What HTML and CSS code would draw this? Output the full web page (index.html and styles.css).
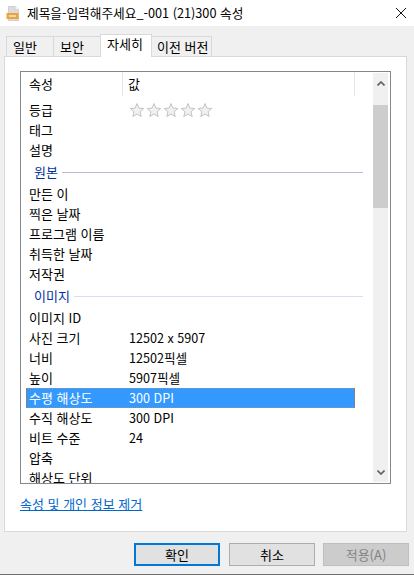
FILE: index.html
```html
<!DOCTYPE html>
<html lang="ko">
<head>
<meta charset="utf-8">
<title>속성</title>
<link rel="stylesheet" href="styles.css">
</head>
<body>
<div class="window">
  <header class="titlebar">
    <svg class="file-icon" width="14" height="15" viewBox="0 0 14 15"><path d="M2.500 0.500h6.500l3.500 3.500v10.500h-10z" fill="#dcdcdc" stroke="#cfcfcf"/><path d="M9 .5v3.500h3.500" fill="#f4f4f4" stroke="#cfcfcf"/><rect x="0.500" y="7" width="12" height="6" fill="#eda23e"/><rect x="3" y="9" width="7" height="2" fill="#f8d9a6"/></svg>
    <span class="title">제목을-입력해주세요_-001 (21)300 속성</span>
    <svg class="close" width="10" height="10" viewBox="0 0 10 10"><path d="M0 0L10 10M10 0L0 10" stroke="#111" stroke-width="1" fill="none"/></svg>
  </header>
  <main class="body">
    <nav class="tabs">
      <span class="tab t1">일반</span>
      <span class="tab t2">보안</span>
      <span class="tab active">자세히</span>
      <span class="tab t4">이전 버전</span>
    </nav>
    <section class="panel">
      <div class="listbox">
        <div class="list">
          <div class="head">
            <span class="hname">속성</span>
            <span class="hval">값</span>
          </div>
          <div class="row"><span class="k">등급</span><span class="v stars"><svg width="84" height="16" viewBox="0 0 84 16"><defs><path id="s" d="M8 1.500l1.900 4.600 4.900.4-3.700 3.200 1.100 4.800L8 12l-4.200 2.500 1.100-4.800L1.200 6.500l4.900-.4z" fill="#f1f1f1" stroke="#c4c4c4"/></defs><use href="#s"/><use href="#s" x="17"/><use href="#s" x="34"/><use href="#s" x="51"/><use href="#s" x="68"/></svg></span></div>
          <div class="row"><span class="k">태그</span></div>
          <div class="row"><span class="k">설명</span></div>
          <div class="group"><span>원본</span><i class="g1"></i></div>
          <div class="row"><span class="k">만든 이</span></div>
          <div class="row"><span class="k">찍은 날짜</span></div>
          <div class="row"><span class="k">프로그램 이름</span></div>
          <div class="row"><span class="k">취득한 날짜</span></div>
          <div class="row"><span class="k">저작권</span></div>
          <div class="group"><span>이미지</span><i class="g2"></i></div>
          <div class="row"><span class="k">이미지 ID</span></div>
          <div class="row"><span class="k">사진 크기</span><span class="v">12502 x 5907</span></div>
          <div class="row"><span class="k">너비</span><span class="v">12502픽셀</span></div>
          <div class="row"><span class="k">높이</span><span class="v">5907픽셀</span></div>
          <div class="row selected"><span class="k">수평 해상도</span><span class="v">300 DPI</span></div>
          <div class="row"><span class="k">수직 해상도</span><span class="v">300 DPI</span></div>
          <div class="row"><span class="k">비트 수준</span><span class="v">24</span></div>
          <div class="row"><span class="k">압축</span></div>
          <div class="row"><span class="k">해상도 단위</span></div>
        </div>
        <div class="scrollbar">
          <svg class="arrow" width="8" height="5" viewBox="0 0 8 5"><path d="M0.500 4.500L4 1l3.500 3.500" fill="none" stroke="#606060" stroke-width="1.600"/></svg>
          <div class="thumb"></div>
          <svg class="arrow down" width="8" height="5" viewBox="0 0 8 5"><path d="M0.500 0.500L4 4l3.500-3.500" fill="none" stroke="#606060" stroke-width="1.600"/></svg>
        </div>
      </div>
      <a class="link">속성 및 개인 정보 제거</a>
    </section>
    <footer class="buttons">
      <button class="btn primary">확인</button>
      <button class="btn">취소</button>
      <button class="btn disabled">적용(A)</button>
    </footer>
  </main>
</div>
</body>
</html>
```
FILE: styles.css
```css
* { box-sizing: border-box; }
html, body { margin: 0; padding: 0; }
body {
  width: 414px; height: 575px; overflow: hidden;
  font-family: "Noto Sans CJK KR", "Noto Sans", sans-serif;
  font-size: 13px; color: #000; background: #f0f0f0;
}
.window { height: 575px; display: flex; flex-direction: column; border-bottom: 1px solid #6e6e6e; }
.titlebar { height: 26px; background: #fff; display: flex; align-items: center; padding: 0 8px 0 6px; flex: none; }
.file-icon { flex: none; margin-right: 7px; }
.title { flex: 1; white-space: nowrap; line-height: 20px; font-size: 12.7px; }
.close { flex: none; }
.body { flex: 1; display: flex; flex-direction: column; padding: 8px 7px 0 4px; background: #f0f0f0; }
.tabs { display: flex; height: 22px; padding-left: 2px; align-items: flex-end; position: relative; z-index: 1; }
.tab { height: 20px; border: 1px solid #d9d9d9; border-bottom: 0; background: #f0f0f0; display: flex; align-items: center; margin-left: -1px; line-height: 18px; padding-left: 6px; }
.tab:first-child { margin-left: 0; }
.t1 { width: 48px; }
.t2 { width: 48px; }
.t4 { width: 61px; padding-left: 5px; }
.tab.active { height: 23px; width: 52px; background: #fff; margin-bottom: -1px; position: relative; z-index: 2; padding-bottom: 5px; }
.panel { height: 476px; background: #fff; border: 1px solid #d9d9d9; padding: 14px 15px 0; flex: none; }
.listbox { height: 413px; border: 1px solid #828790; display: flex; background: #fff; width: 371px; }
.list { width: 352px; overflow: hidden; flex: none; padding-left: 5px; }
.head { height: 24px; width: 329px; display: flex; align-items: center; border-right: 1px solid #e5e5e5; margin-bottom: 4px; }
.hname { width: 96px; padding-left: 3px; line-height: 20px; }
.hval { flex: 1; padding-left: 5px; line-height: 20px; border-left: 1px solid #e5e5e5; height: 24px; display: flex; align-items: center; }
.row { height: 20px; display: flex; align-items: center; width: 329px; border: 1px solid transparent; white-space: nowrap; }
.k { width: 101px; padding-left: 2px; line-height: 18px; flex: none; }
.v { flex: 1; line-height: 18px; padding-left: 1px; font-size: 12.6px; }
.stars { display: flex; align-items: center; }
.selected { background: #3399ff; color: #fff; border: 1px dotted #8f94a0; border-right-color: #c96a10; border-left-color: #c96a10; }
.group { height: 24px; display: flex; align-items: center; color: #0033a0; padding-left: 8px; gap: 4px; width: 337px; }
.group span { line-height: 18px; white-space: nowrap; }
.group i { flex: 1; height: 1px; }
.g1 { background: #b4bcd6; }
.g2 { background: #d5dff0; }
.scrollbar { width: 15px; background: #f0f0f0; display: flex; flex-direction: column; align-items: center; padding: 8px 0 7px; margin: 1px 0; }
.arrow { flex: none; }
.thumb { width: 15px; height: 103px; background: #cdcdcd; margin-top: 19px; }
.arrow.down { margin-top: auto; }
.link { display: inline-block; margin-top: 11px; color: #0066cc; text-decoration: underline; line-height: 18px; }
.buttons { display: flex; justify-content: flex-end; gap: 8px; padding: 11px 0 0 0; margin-right: -2px; }
.btn { width: 86px; height: 23px; font: inherit; line-height: 18px; padding: 0; background: #e1e1e1; border: 1px solid #adadad; color: #000; }
.primary { border: 2px solid #0078d7; margin-right: 1px; }
.disabled { background: #cccccc; border-color: #bfbfbf; color: #838383; }
```
